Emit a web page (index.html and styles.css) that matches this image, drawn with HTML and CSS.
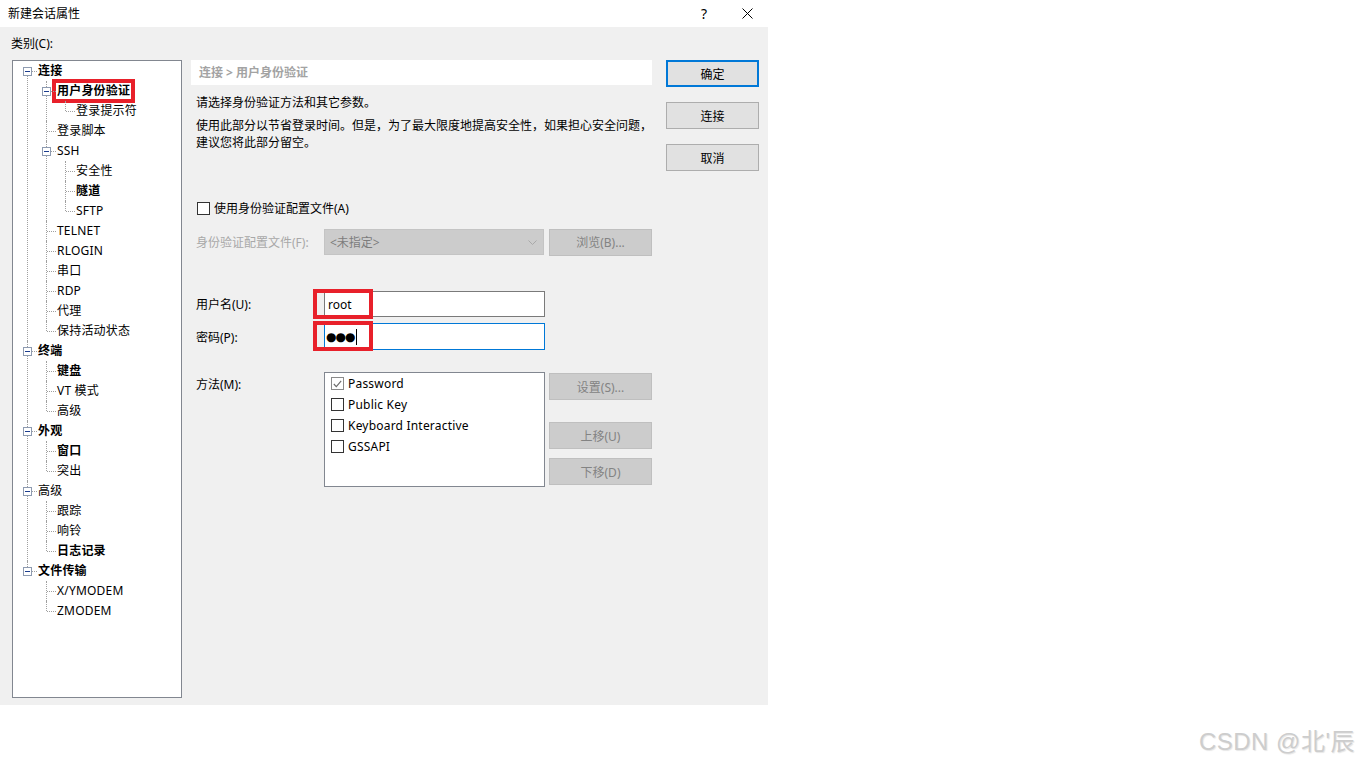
FILE: index.html
```html
<!DOCTYPE html>
<html lang="zh-CN">
  <head>
    <meta charset="UTF-8" />
    <title>新建会话属性</title>
    <link rel="stylesheet" href="styles.css">
  </head>
  <body>
    <div class="dialog">
      <div class="titlebar">
        <span class="title">新建会话属性</span>
        <span class="help">?</span>
        <span class="close">
          <svg width="11" height="11" viewBox="0 0 11 11"><path d="M0.5 0.5 L10.5 10.5 M10.5 0.5 L0.5 10.5" stroke="#000" stroke-width="1" fill="none"/></svg>
        </span>
      </div>
      <div class="body">
        <div class="left">
          <div class="cat-label">类别(C):</div>
          <div class="tree">
            <ul class="root">
              <li class="first"><div class="row"><i class="tg"></i><span class="b">连接</span></div>
                <ul>
                  <li><div class="row"><i class="tg"></i><span class="b sel">用户身份验证</span></div>
                    <ul>
                      <li><div class="row"><span>登录提示符</span></div></li>
                    </ul>
                  </li>
                  <li><div class="row"><span>登录脚本</span></div></li>
                  <li><div class="row"><i class="tg"></i><span>SSH</span></div>
                    <ul>
                      <li><div class="row"><span>安全性</span></div></li>
                      <li><div class="row"><span class="b">隧道</span></div></li>
                      <li><div class="row"><span>SFTP</span></div></li>
                    </ul>
                  </li>
                  <li><div class="row"><span>TELNET</span></div></li>
                  <li><div class="row"><span>RLOGIN</span></div></li>
                  <li><div class="row"><span>串口</span></div></li>
                  <li><div class="row"><span>RDP</span></div></li>
                  <li><div class="row"><span>代理</span></div></li>
                  <li><div class="row"><span>保持活动状态</span></div></li>
                </ul>
              </li>
              <li><div class="row"><i class="tg"></i><span class="b">终端</span></div>
                <ul>
                  <li><div class="row"><span class="b">键盘</span></div></li>
                  <li><div class="row"><span>VT 模式</span></div></li>
                  <li><div class="row"><span>高级</span></div></li>
                </ul>
              </li>
              <li><div class="row"><i class="tg"></i><span class="b">外观</span></div>
                <ul>
                  <li><div class="row"><span class="b">窗口</span></div></li>
                  <li><div class="row"><span>突出</span></div></li>
                </ul>
              </li>
              <li><div class="row"><i class="tg"></i><span>高级</span></div>
                <ul>
                  <li><div class="row"><span>跟踪</span></div></li>
                  <li><div class="row"><span>响铃</span></div></li>
                  <li><div class="row"><span class="b">日志记录</span></div></li>
                </ul>
              </li>
              <li><div class="row"><i class="tg"></i><span class="b">文件传输</span></div>
                <ul>
                  <li><div class="row"><span>X/YMODEM</span></div></li>
                  <li><div class="row"><span>ZMODEM</span></div></li>
                </ul>
              </li>
            </ul>
          </div>
        </div>

        <div class="panel">
          <div class="crumb">连接 &gt; 用户身份验证</div>
          <div class="content">
            <p class="intro">请选择身份验证方法和其它参数。</p>
            <p class="note">使用此部分以节省登录时间。但是，为了最大限度地提高安全性，如果担心安全问题，<br>建议您将此部分留空。</p>
            <div class="check-row"><span class="cb"></span>使用身份验证配置文件(A)</div>
            <div class="field profile">
              <span class="lbl off">身份验证配置文件(F):</span>
              <div class="combo">
                <span>&lt;未指定&gt;</span>
                <svg width="9" height="5" viewBox="0 0 9 5"><path d="M0.5 0.5 L4.5 4.5 L8.5 0.5" stroke="#a9a9a9" fill="none"/></svg>
              </div>
              <button class="btn off">浏览(B)...</button>
            </div>
            <div class="field user">
              <span class="lbl">用户名(U):</span>
              <div class="input"><span class="mark"></span>root</div>
            </div>
            <div class="field pass">
              <span class="lbl">密码(P):</span>
              <div class="input focus"><span class="mark"></span><span class="dots">●●●</span><span class="caret"></span></div>
            </div>
            <div class="field method">
              <span class="lbl">方法(M):</span>
              <div class="listbox">
                <div class="opt"><span class="cb on"><svg width="9" height="8" viewBox="0 0 9 8"><path d="M0.8 4 L3.3 6.6 L8.2 0.8" stroke="#6a6a6a" stroke-width="1.1" fill="none"/></svg></span>Password</div>
                <div class="opt"><span class="cb"></span>Public Key</div>
                <div class="opt"><span class="cb"></span>Keyboard Interactive</div>
                <div class="opt"><span class="cb"></span>GSSAPI</div>
              </div>
              <div class="side">
                <button class="btn off">设置(S)...</button>
                <button class="btn off up">上移(U)</button>
                <button class="btn off">下移(D)</button>
              </div>
            </div>
          </div>
        </div>

        <div class="actions">
          <button class="btn default">确定</button>
          <button class="btn">连接</button>
          <button class="btn">取消</button>
        </div>
      </div>
    </div>
    <div class="watermark">CSDN @北'辰</div>
  </body>
</html>
```

FILE: styles.css
```css
* {
  box-sizing: border-box;
}
body {
  margin: 0;
  background: #fff;
  color: #000;
  font-family: "Noto Sans", "Noto Sans CJK SC", sans-serif;
  font-size: 12px;
}
.dialog {
  width: 768px;
  height: 705px;
  background: #f0f0f0;
  display: flex;
  flex-direction: column;
}
.titlebar {
  height: 27px;
  background: #fff;
  display: flex;
  align-items: center;
  padding: 0 14px 0 8px;
}
.title {
  flex: 1;
  line-height: 16px;
}
.help {
  width: 16px;
  text-align: center;
  font-size: 14px;
  margin-right: 30px;
}
.close {
  width: 12px;
  height: 11px;
  display: flex;
}

.body {
  flex: 1;
  display: flex;
  padding-left: 12px;
}
.left {
  width: 170px;
  display: flex;
  flex-direction: column;
}
.cat-label {
  height: 33px;
  line-height: 33px;
  margin-left: -1px;
}

/* tree */
.tree {
  height: 638px;
  background: #fff;
  border: 1px solid #828790;
}
.tree ul {
  list-style: none;
  margin: 0;
  padding: 0 0 0 19px;
}
.tree ul.root {
  padding-left: 0;
}
.tree li {
  position: relative;
}
.tree li::before {
  content: "";
  position: absolute;
  left: 14px;
  top: 0;
  bottom: 0;
  border-left: 1px dotted #a0a0a0;
}
.tree li.first::before {
  top: 10px;
}
.tree li:last-child::before {
  bottom: auto;
  height: 10px;
}
.row {
  position: relative;
  height: 20px;
  display: flex;
  align-items: center;
  padding-left: 25px;
  white-space: nowrap;
}
.row::before {
  content: "";
  position: absolute;
  left: 15px;
  top: 10px;
  width: 9px;
  border-top: 1px dotted #a0a0a0;
}
.row span {
  line-height: 14px;
  letter-spacing: 0.2px;
}
.b {
  font-weight: bold;
}
.sel {
  outline: 4px solid #e8202a;
  outline-offset: 1px;
}
.tg {
  position: absolute;
  left: 10px;
  top: 6px;
  width: 9px;
  height: 9px;
  border: 1px solid #8e9bb1;
  background: #fff;
  z-index: 1;
}
.tg::after {
  content: "";
  position: absolute;
  left: 1px;
  top: 3px;
  width: 5px;
  height: 1px;
  background: #1c3d8f;
}

/* middle panel */
.panel {
  width: 461px;
  margin-left: 9px;
  margin-top: 33px;
}
.crumb {
  height: 25px;
  line-height: 25px;
  background: #fff;
  padding-left: 8px;
  color: #a3a3a3;
  font-weight: bold;
}
.content {
  padding-left: 5px;
}
.content p {
  margin: 0;
  line-height: 17px;
  white-space: nowrap;
}
.intro {
  margin-top: 9px !important;
}
.note {
  margin-top: 6px !important;
}
.check-row {
  margin-top: 49px;
  height: 16px;
  display: flex;
  align-items: center;
  gap: 4px;
  padding-left: 1px;
}
.cb {
  width: 13px;
  height: 13px;
  border: 1px solid #333;
  background: #fff;
  display: flex;
  align-items: center;
  justify-content: center;
  flex-shrink: 0;
}
.cb.on {
  border-color: #8a8a8a;
}
.field {
  display: flex;
  align-items: center;
}
.lbl {
  width: 128px;
  flex-shrink: 0;
}
.lbl.off {
  color: #a8a8a8;
}
.profile {
  margin-top: 13px;
  height: 26px;
}
.combo {
  width: 220px;
  height: 26px;
  background: #cccccc;
  border: 1px solid #c4c4c4;
  display: flex;
  align-items: center;
  justify-content: space-between;
  padding: 0 6px 0 5px;
  color: #7c7c7c;
}
.user {
  margin-top: 36px;
}
.pass {
  margin-top: 6px;
}
.input {
  position: relative;
  width: 221px;
  height: 26px;
  background: #fff;
  border: 1px solid #7a7a7a;
  display: flex;
  align-items: center;
  padding-left: 3px;
}
.input.focus {
  height: 27px;
  border-color: #0078d7;
  padding-left: 1px;
}
.dots {
  font-family: "DejaVu Sans", sans-serif;
  font-size: 12px;
  letter-spacing: -1px;
}
.caret {
  width: 1px;
  height: 16px;
  background: #000;
  margin-left: 2px;
}
.mark {
  position: absolute;
  left: -12px;
  top: -3px;
  width: 60px;
  height: 30px;
  border: 4px solid #e8202a;
}
.method {
  margin-top: 22px;
  align-items: flex-start;
}
.method .lbl {
  line-height: 26px;
}
.listbox {
  width: 221px;
  height: 115px;
  background: #fff;
  border: 1px solid #828790;
}
.opt {
  height: 21px;
  display: flex;
  align-items: center;
  gap: 4px;
  padding-left: 6px;
  letter-spacing: 0.2px;
}
.side {
  display: flex;
  flex-direction: column;
  margin-left: 4px;
  padding-top: 1px;
}
.side .up {
  margin-top: 22px;
  margin-bottom: 9px;
}

/* buttons */
.btn {
  width: 103px;
  height: 27px;
  font: inherit;
  background: #e1e1e1;
  border: 1px solid #adadad;
  color: #000;
  padding: 0;
}
.btn.off {
  background: #cccccc;
  border-color: #bfbfbf;
  color: #838383;
}
.profile .btn {
  margin-left: 5px;
}
.actions {
  width: 93px;
  margin-left: 14px;
  margin-top: 33px;
  display: flex;
  flex-direction: column;
  gap: 15px;
}
.actions .btn {
  width: 93px;
}
.btn.default {
  border: 2px solid #0078d7;
}

.watermark {
  position: absolute;
  right: 5px;
  top: 722px;
  font-family: "Liberation Sans", "Noto Sans CJK SC", sans-serif;
  font-size: 24px;
  letter-spacing: 0.5px;
  color: #cdcdcd;
  text-shadow: 1px 1px 1px #e6e6e6;
}
```
